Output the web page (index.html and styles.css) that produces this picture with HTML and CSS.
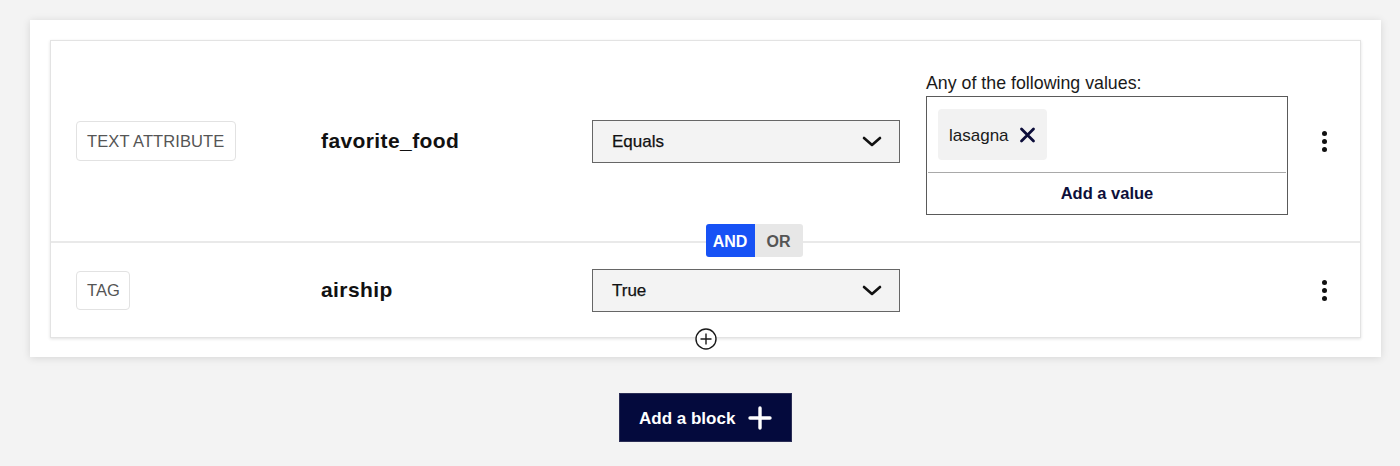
FILE: index.html
```html
<!DOCTYPE html>
<html lang="en">
<head>
<meta charset="utf-8">
<title>Segment builder</title>
<link rel="stylesheet" href="styles.css">
</head>
<body>
<div class="page">
  <div class="panel">
    <div class="card">
      <div class="row row-first">
        <div class="cell"><span class="badge">TEXT ATTRIBUTE</span></div>
        <div class="cell name">favorite_food</div>
        <div class="cell">
          <div class="select">
            <span>Equals</span>
            <svg class="chev" width="20" height="11" viewBox="0 0 20 11"><polyline points="2,2 10,9 18,2" fill="none" stroke="#111" stroke-width="2.6" stroke-linecap="round" stroke-linejoin="round"/></svg>
          </div>
        </div>
        <div class="cell values">
          <div class="values-label">Any of the following values:</div>
          <div class="values-box">
            <div class="chips">
              <span class="chip"><span class="chip-text">lasagna</span>
                <svg width="17" height="16" viewBox="0 0 17 16"><path d="M2.5 2 L14.5 14 M14.5 2 L2.5 14" stroke="#0c0d3a" stroke-width="2.8" stroke-linecap="round"/></svg>
              </span>
            </div>
            <div class="add-value">Add a value</div>
          </div>
        </div>
        <div class="cell kebab"><span></span><span></span><span></span></div>
      </div>
      <div class="row row-second">
        <div class="cell"><span class="badge badge-small">TAG</span></div>
        <div class="cell name">airship</div>
        <div class="cell">
          <div class="select">
            <span>True</span>
            <svg class="chev" width="20" height="11" viewBox="0 0 20 11"><polyline points="2,2 10,9 18,2" fill="none" stroke="#111" stroke-width="2.6" stroke-linecap="round" stroke-linejoin="round"/></svg>
          </div>
        </div>
        <div class="cell"></div>
        <div class="cell kebab"><span></span><span></span><span></span></div>
      </div>
      <div class="logic"><span class="logic-and">AND</span><span class="logic-or">OR</span></div>
      <div class="add-row">
        <svg width="22" height="22" viewBox="0 0 22 22"><circle cx="11" cy="11" r="10" fill="#fff" stroke="#1a1a1a" stroke-width="1.4"/><path d="M11 5.5 V16.5 M5.5 11 H16.5" stroke="#1a1a1a" stroke-width="1.4"/></svg>
      </div>
    </div>
  </div>
  <div class="actions">
    <button class="add-block"><span class="add-block-text">Add a block</span>
      <svg width="24" height="24" viewBox="0 0 24 24"><path d="M12 2 V22 M2 12 H22" stroke="#fff" stroke-width="3.4" stroke-linecap="round"/></svg>
    </button>
  </div>
</div>
</body>
</html>
```
FILE: styles.css
```css
html, body {
  margin: 0;
  padding: 0;
  background: #f3f3f3;
}
body {
  font-family: "Liberation Sans", Arial, sans-serif;
  color: #111;
}
.page {
  width: 1351px;
  margin-left: 30px;
  padding-top: 20px;
}
.panel {
  background: #fff;
  padding: 20px 20px 19px 20px;
  box-shadow: 0 1px 8px rgba(0, 0, 0, 0.12);
}
.card {
  position: relative;
  border: 1px solid #e3e3e3;
  box-shadow: 0 1px 3px rgba(0, 0, 0, 0.12);
}
.row {
  display: grid;
  grid-template-columns: 245px 271px 334px 362px 1fr;
  align-items: center;
  padding-left: 25px;
}
.row-first {
  height: 200px;
}
.row-second {
  height: 94px;
  border-top: 2px solid #e9e9e9;
}
.cell {
  display: flex;
  align-items: center;
}
.badge {
  display: inline-flex;
  align-items: center;
  height: 38px;
  padding: 0 11px 0 10px;
  border: 1px solid #e2e2e2;
  border-radius: 4px;
  font-size: 16.5px;
  color: #555;
  letter-spacing: 0.1px;
}
.badge-small {
  height: 37px;
  padding: 0 9px 0 10px;
}
.name {
  font-size: 21px;
  font-weight: 700;
  letter-spacing: 0.4px;
  color: #111;
}
.select {
  box-sizing: border-box;
  width: 308px;
  height: 43px;
  display: flex;
  align-items: center;
  justify-content: space-between;
  padding: 0 17px 0 19px;
  background: #f3f3f3;
  border: 1px solid #666;
  font-size: 17px;
  color: #111;
  -webkit-text-stroke: 0.25px #111;
}
.select span {
  padding-top: 1px;
}
.select .chev {
  display: block;
}
.values {
  flex-direction: column;
  align-items: stretch;
  align-self: start;
  margin-top: 30px;
}
.values-label {
  font-size: 17.8px;
  line-height: 25px;
  color: #1a1a1a;
}
.values-box {
  box-sizing: border-box;
  width: 362px;
  border: 1px solid #5a5a5a;
}
.chips {
  padding: 12px 11px;
  display: flex;
}
.chip {
  display: inline-flex;
  align-items: center;
  gap: 10px;
  height: 51px;
  padding: 0 11px;
  background: #f2f2f2;
  border-radius: 4px;
  font-size: 17px;
  color: #1a1a1a;
}
.chip-text {
  padding-top: 3px;
}
.add-value {
  margin: 0 1px;
  border-top: 1px solid #a9a9a9;
  height: 41px;
  display: flex;
  align-items: center;
  justify-content: center;
  font-size: 16.5px;
  font-weight: 700;
  color: #0d0f3a;
}
.kebab {
  flex-direction: column;
  justify-content: center;
  gap: 3px;
}
.kebab span {
  width: 5px;
  height: 5px;
  border-radius: 50%;
  background: #111;
}
.logic {
  position: absolute;
  left: 50%;
  top: 183px;
  display: flex;
  height: 33px;
  border-radius: 3px;
  overflow: hidden;
  font-size: 16px;
  font-weight: 700;
}
.logic span {
  display: flex;
  align-items: center;
  justify-content: center;
  padding-top: 2px;
  box-sizing: border-box;
}
.logic-and {
  width: 49px;
  background: #1752f5;
  color: #fff;
}
.logic-or {
  width: 48px;
  background: #e7e7e7;
  color: #555;
}
.add-row {
  position: absolute;
  left: 50%;
  bottom: -13px;
  transform: translateX(-50%);
  width: 22px;
  height: 22px;
}
.add-row svg {
  display: block;
}
.actions {
  display: flex;
  justify-content: center;
  margin-top: 36px;
}
.add-block {
  display: inline-flex;
  align-items: center;
  gap: 13px;
  box-sizing: border-box;
  width: 173px;
  height: 49px;
  padding: 0 0 0 19px;
  background: #040a3d;
  border: 1px solid #2a2d55;
  color: #fff;
  font-family: "Liberation Sans", Arial, sans-serif;
  font-size: 17px;
  font-weight: 700;
  white-space: nowrap;
  cursor: pointer;
}
.add-block-text {
  padding-top: 2px;
}
.add-block svg {
  display: block;
  flex: none;
}
```
